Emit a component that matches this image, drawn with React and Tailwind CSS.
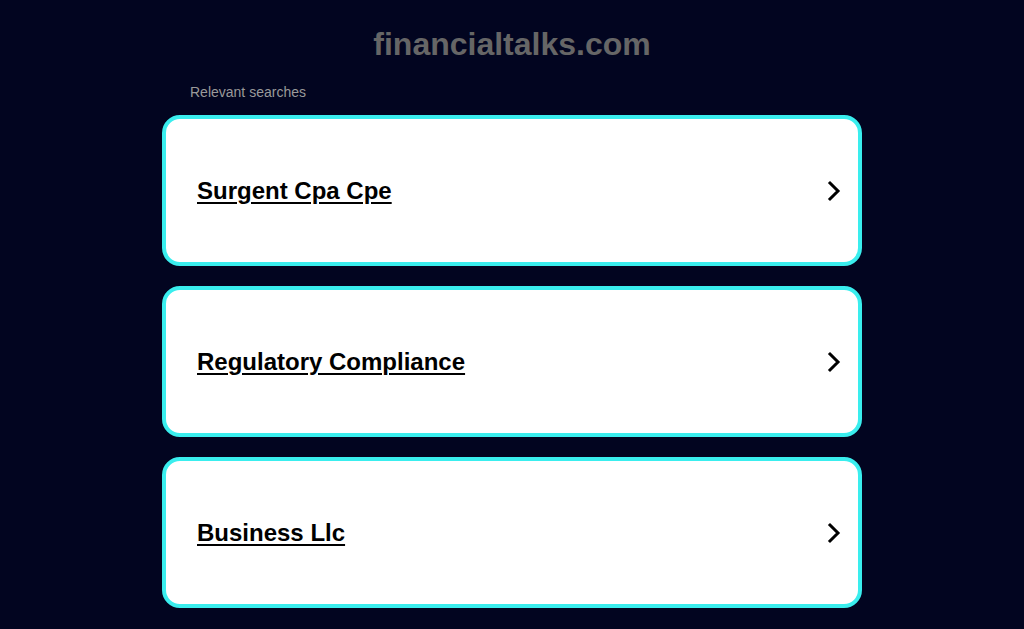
import React from 'react';

const searches = ['Surgent Cpa Cpe', 'Regulatory Compliance', 'Business Llc'];

const Chevron = () => (
  <svg width="14" height="22" viewBox="0 0 14 22" fill="none">
    <path d="M3 3l8 8-8 8" stroke="#000" strokeWidth="3" strokeLinecap="square" />
  </svg>
);

const App = () => {
  return (
    <div
      className="min-h-[629px] bg-[#020520] flex flex-col items-center"
      style={{ fontFamily: '"Liberation Sans", Arial, sans-serif' }}
    >
      <h1 className="mt-[25px] text-[32px] leading-[38px] font-bold text-[#666666]">financialtalks.com</h1>
      <div className="w-[700px] mt-[21px]">
        <p className="pl-[28px] text-[14px] leading-[16px] text-[#9a9a9a]">Relevant searches</p>
        <div className="mt-[15px] flex flex-col gap-[20px]">
          {searches.map((s) => (
            <a
              key={s}
              href="#"
              className="h-[151px] bg-white border-[4px] border-[#3aeeee] rounded-[18px] flex items-center justify-between pl-[31px] pr-[17px]"
            >
              <span className="text-[24px] font-bold text-black underline underline-offset-[3px] decoration-[2px]">{s}</span>
              <Chevron />
            </a>
          ))}
        </div>
      </div>
    </div>
  );
};

export default App;
